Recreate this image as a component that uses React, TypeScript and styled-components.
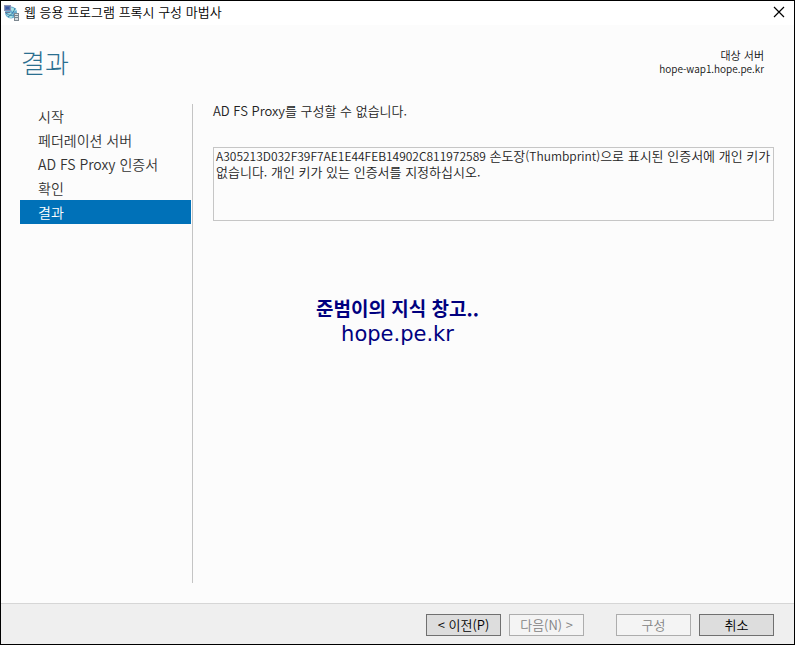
import React from "react";
import styled, { createGlobalStyle, css } from "styled-components";

const GlobalStyle = createGlobalStyle`
  *, *::before, *::after { box-sizing: border-box; }
  body {
    margin: 0;
    background: #fcfcfc;
    color: #222;
    font-family: "Noto Sans CJK KR", sans-serif;
    font-size: 13px;
    font-weight: 350;
    line-height: 16px;
    word-break: keep-all;
  }
  h1, p, ol { margin: 0; padding: 0; }
`;

const Window = styled.div`
  position: relative;
  display: flex;
  flex-direction: column;
  min-height: 100vh;
  border: 1px solid #000;
`;

const TitleBar = styled.header`
  display: flex;
  align-items: center;
  gap: 4px;
  height: 24px;
  padding: 0 9px 2px 2px;
  background: #fff;
  color: #000;
`;

const TitleText = styled.span`
  flex: 1;
`;

const CloseButton = styled.button`
  display: flex;
  padding: 0;
  border: 0;
  background: none;
  color: #000;
`;

const PageHeader = styled.div`
  display: flex;
  justify-content: space-between;
  align-items: flex-start;
  height: 78px;
  padding: 23px 30px 0 20px;
`;

const PageTitle = styled.h1`
  color: #2b6f90;
  font-size: 26px;
  font-weight: 300;
  line-height: 28px;
`;

const Target = styled.div`
  color: #111;
  text-align: right;
`;

const TargetLabel = styled.p`
  font-size: 11px;
  line-height: 14px;
`;

const TargetHost = styled.p`
  font-size: 10px;
  line-height: 14px;
`;

const Main = styled.main`
  flex: 1;
  display: flex;
  gap: 20px;
  padding: 1px 20px 20px 19px;
`;

const Steps = styled.nav`
  flex: 0 0 173px;
  padding-right: 1px;
  border-right: 1px solid #c4c4c4;
`;

const StepList = styled.ol`
  list-style: none;
`;

const StepLink = styled.a<{ $current?: boolean }>`
  display: block;
  padding: 0 18px;
  color: ${(p) => (p.$current ? "#fff" : "#333")};
  background: ${(p) => (p.$current ? "#0071b8" : "transparent")};
  font-size: 14px;
  line-height: 24px;
  text-decoration: none;
`;

const Content = styled.section`
  flex: 1;
  min-width: 0;
`;

const Message = styled.p`
  padding-bottom: 29px;
  line-height: 14px;
`;

const Details = styled.div`
  min-height: 74px;
  padding: 0 2px;
  border: 1px solid #c6c6c6;
`;

const Latin = styled.span`
  font-size: 12px;
`;

const Watermark = styled.div`
  position: absolute;
  top: 294px;
  left: 0;
  right: 0;
  color: #00007f;
  text-align: center;
  pointer-events: none;
`;

const WatermarkTitle = styled.p`
  font-size: 19px;
  font-weight: 700;
  line-height: 26px;
`;

const WatermarkSite = styled.p`
  font-family: "DejaVu Sans", sans-serif;
  font-size: 21px;
  font-weight: 400;
  line-height: 26px;
`;

const Footer = styled.footer`
  display: flex;
  justify-content: flex-end;
  gap: 32px;
  padding: 10px 20px 8px;
  border-top: 1px solid #d6d6d6;
  background: #efefef;
`;

const ButtonGroup = styled.div`
  display: flex;
  gap: 8px;
`;

const Button = styled.button`
  width: 75px;
  height: 22px;
  padding: 0;
  border: 1px solid #707070;
  background: #ddd;
  color: #000;
  font: inherit;
  ${(p) =>
    p.disabled &&
    css`
      border-color: #adadad;
      background: #f4f4f4;
      color: #838383;
    `}
`;

const AppIcon = () => (
  <svg width="17" height="17" viewBox="0 0 17 17" aria-hidden="true">
    <circle cx="8" cy="8.500" r="6" fill="#69acd0" />
    <path d="M7 3.500c3 .2 5 1 6.500 3L10 8 8 6zM3.500 10l4-1.500 3 2.500-2 3C6 14 4.500 12.500 3.500 10z" fill="#a9e3e2" />
    <path d="M3 9c3 3 7 3 11 1M5 13c3-2 6-5 7-9" stroke="#397ea8" fill="none" />
    <rect x="1.500" y="1.500" width="6" height="5" fill="#4f6fae" stroke="#8a91b4" />
    <path d="M3 3h3v2H3z" fill="#3b57a0" />
    <path d="M2 8.500h5" stroke="#6a7796" />
    <rect x="11.500" y="9.500" width="4" height="7" fill="#d9e0e2" stroke="#7d8890" />
    <path d="M12 11.500h3M12 13.500h3" stroke="#718592" />
  </svg>
);

const steps = ["시작", "페더레이션 서버", "AD FS Proxy 인증서", "확인", "결과"];
const currentStep = "결과";

export default function App() {
  return (
    <>
      <GlobalStyle />
      <Window lang="ko">
        <TitleBar>
          <AppIcon />
          <TitleText>웹 응용 프로그램 프록시 구성 마법사</TitleText>
          <CloseButton type="button" aria-label="닫기">
            <svg width="12" height="12" viewBox="0 0 12 12" aria-hidden="true">
              <path d="M1 1l10 10M11 1L1 11" stroke="currentColor" strokeWidth="1.200" />
            </svg>
          </CloseButton>
        </TitleBar>
        <PageHeader>
          <PageTitle>결과</PageTitle>
          <Target>
            <TargetLabel>대상 서버</TargetLabel>
            <TargetHost>hope-wap1.hope.pe.kr</TargetHost>
          </Target>
        </PageHeader>
        <Main>
          <Steps aria-label="단계">
            <StepList>
              {steps.map((step) => (
                <li key={step}>
                  <StepLink
                    href="#"
                    $current={step === currentStep}
                    aria-current={step === currentStep ? "step" : undefined}
                  >
                    {step}
                  </StepLink>
                </li>
              ))}
            </StepList>
          </Steps>
          <Content>
            <Message>AD FS Proxy를 구성할 수 없습니다.</Message>
            <Details>
              <Latin>A305213D032F39F7AE1E44FEB14902C811972589</Latin> 손도장
              <Latin>(Thumbprint)</Latin>으로 표시된 인증서에 개인 키가 없습니다. 개인
              키가 있는 인증서를 지정하십시오.
            </Details>
          </Content>
        </Main>
        <Footer>
          <ButtonGroup>
            <Button type="button">&lt; 이전(P)</Button>
            <Button type="button" disabled>
              다음(N) &gt;
            </Button>
          </ButtonGroup>
          <ButtonGroup>
            <Button type="button" disabled>
              구성
            </Button>
            <Button type="button">취소</Button>
          </ButtonGroup>
        </Footer>
        <Watermark>
          <WatermarkTitle>준범이의 지식 창고..</WatermarkTitle>
          <WatermarkSite>hope.pe.kr</WatermarkSite>
        </Watermark>
      </Window>
    </>
  );
}
